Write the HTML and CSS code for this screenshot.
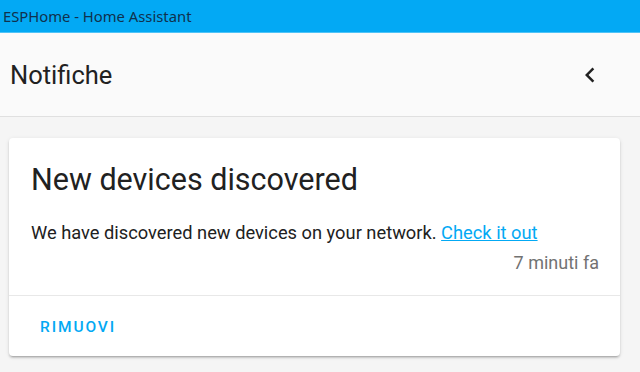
FILE: index.html
```html
<!DOCTYPE html>
<html lang="it">
<head>
    <meta charset="UTF-8">
    <meta name="viewport" content="width=device-width, initial-scale=1.0">
    <title>ESPHome - Home Assistant</title>
    <link rel="stylesheet" href="styles.css">
</head>
<body>
    <div class="titlebar">ESPHome - Home Assistant</div>

    <div class="header">
        <h1>Notifiche</h1>
        <button class="icon-btn" aria-label="Chiudi">
            <svg viewBox="0 0 24 24" width="30" height="30">
                <path d="M15.41,16.58L10.83,12L15.41,7.41L14,6L8,12L14,18L15.41,16.58Z"/>
            </svg>
        </button>
    </div>

    <div class="content">
        <div class="card">
            <div class="card-body">
                <h2>New devices discovered</h2>
                <p class="message">We have discovered new devices on your network. <a href="#">Check it out</a></p>
                <div class="time">7 minuti fa</div>
            </div>
            <div class="card-actions">
                <button class="text-btn">Rimuovi</button>
            </div>
        </div>
    </div>
</body>
</html>
```

FILE: styles.css
```css
* {
    margin: 0;
    padding: 0;
    box-sizing: border-box;
}

body {
    font-family: Roboto, 'Noto Sans', sans-serif;
    background: #f5f5f5;
    height: 100vh;
    overflow: hidden;
}

.titlebar {
    height: 33px;
    background: #03a9f4;
    border-bottom: 1px solid #4fc3f7;
    color: #10314d;
    font-family: 'Noto Sans', sans-serif;
    font-size: 14.8px;
    line-height: 32px;
    padding-left: 3px;
}

.header {
    height: 84px;
    background: #fafafa;
    border-bottom: 1px solid #e0e0e0;
    display: flex;
    align-items: center;
    justify-content: space-between;
    padding: 0 35px 0 10px;
}

.header h1 {
    font-size: 25.5px;
    font-weight: 400;
    color: #212121;
}

.icon-btn {
    background: none;
    border: none;
    display: flex;
    fill: #212121;
}

.content {
    padding: 21px 20px 0 9px;
}

.card {
    background: white;
    border-radius: 4px;
    box-shadow: 0 2px 2px rgba(0,0,0,0.14), 0 1px 4px rgba(0,0,0,0.1), 0 3px 1px -2px rgba(0,0,0,0.12);
}

.card-body {
    padding: 22px 21px 20px 22px;
}

.card-body h2 {
    font-size: 30.5px;
    font-weight: 400;
    color: #212121;
    line-height: 40px;
    margin-bottom: 21px;
}

.message {
    font-size: 18.3px;
    color: #212121;
    line-height: 24px;
}

.message a {
    color: #03a9f4;
}

.time {
    text-align: right;
    font-size: 18px;
    color: #727272;
    line-height: 24px;
    margin-top: 6px;
}

.card-actions {
    border-top: 1px solid #e8e8e8;
    padding: 16px 22px 14px;
}

.text-btn {
    background: none;
    border: none;
    font-family: Roboto, sans-serif;
    font-size: 15.5px;
    font-weight: 500;
    text-transform: uppercase;
    letter-spacing: 1.9px;
    color: #03a9f4;
    padding: 6px 9px;
}
```
